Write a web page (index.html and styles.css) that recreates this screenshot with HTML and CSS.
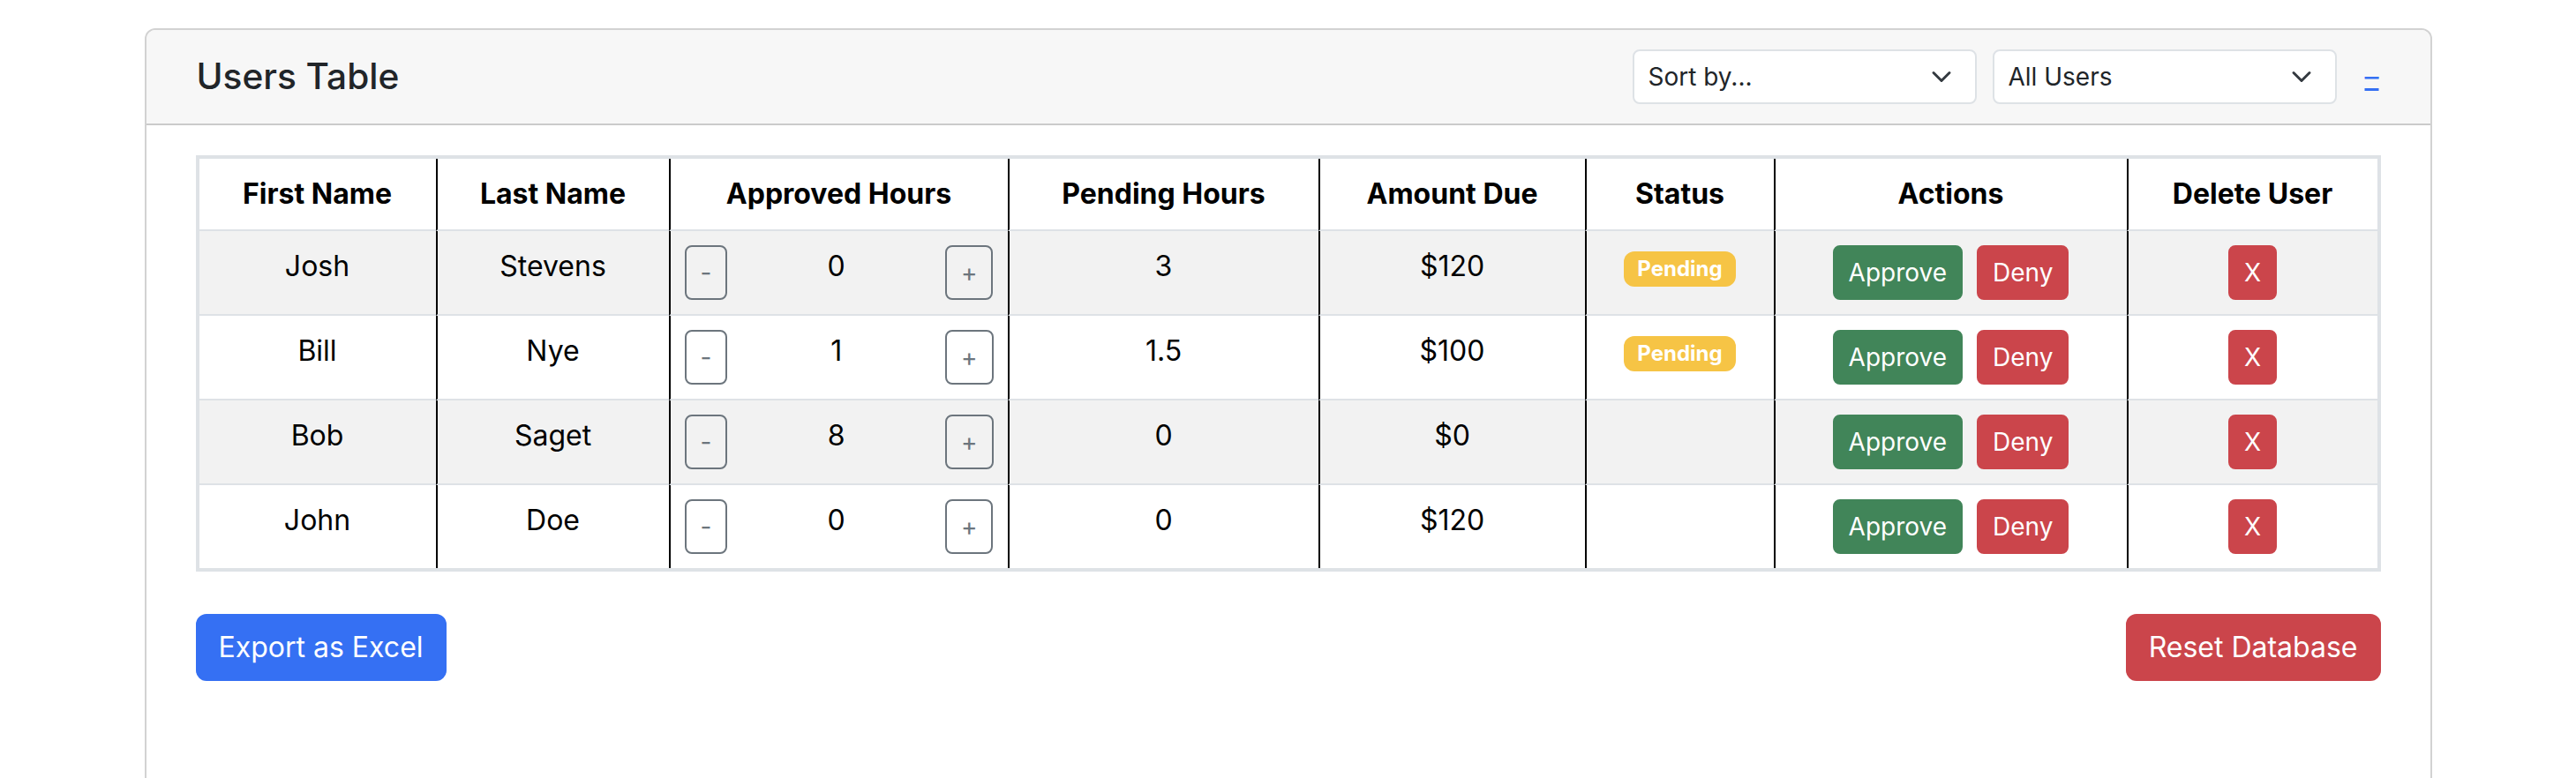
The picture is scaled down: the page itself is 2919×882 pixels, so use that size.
FILE: index.html
```html
<!DOCTYPE html>
<html lang="en">
<head>
<meta charset="utf-8">
<title>Users Table</title>
<link rel="stylesheet" href="styles.css">
</head>
<body>
<div class="container">
  <div class="card">
    <div class="card-header">
      <h5 class="card-title">Users Table</h5>
      <div class="header-controls">
        <span class="select-wrap">
          <select class="form-select"><option>Sort by...</option></select>
          <svg class="chevron" viewBox="0 0 16 16" aria-hidden="true"><path d="m2 5 6 6 6-6"/></svg>
        </span>
        <span class="select-wrap select-gap">
          <select class="form-select"><option>All Users</option></select>
          <svg class="chevron" viewBox="0 0 16 16" aria-hidden="true"><path d="m2 5 6 6 6-6"/></svg>
        </span>
        <button class="btn-link" type="button">–</button>
      </div>
    </div>
    <div class="card-body">
      <table class="users-table">
        <colgroup>
          <col class="c1"><col class="c2"><col class="c3"><col class="c4">
          <col class="c5"><col class="c6"><col class="c7"><col class="c8">
        </colgroup>
        <thead>
          <tr>
            <th>First Name</th><th>Last Name</th><th>Approved Hours</th><th>Pending Hours</th>
            <th>Amount Due</th><th>Status</th><th>Actions</th><th>Delete User</th>
          </tr>
        </thead>
        <tbody>
          <tr class="striped">
            <td>Josh</td><td>Stevens</td>
            <td><div class="hours"><button class="btn-sm btn-outline">-</button><span>0</span><button class="btn-sm btn-outline">+</button></div></td>
            <td>3</td><td>$120</td>
            <td><span class="badge">Pending</span></td>
            <td><div class="actions"><button class="btn-sm btn-success">Approve</button><button class="btn-sm btn-danger">Deny</button></div></td>
            <td><button class="btn-sm btn-danger">X</button></td>
          </tr>
          <tr>
            <td>Bill</td><td>Nye</td>
            <td><div class="hours"><button class="btn-sm btn-outline">-</button><span>1</span><button class="btn-sm btn-outline">+</button></div></td>
            <td>1.5</td><td>$100</td>
            <td><span class="badge">Pending</span></td>
            <td><div class="actions"><button class="btn-sm btn-success">Approve</button><button class="btn-sm btn-danger">Deny</button></div></td>
            <td><button class="btn-sm btn-danger">X</button></td>
          </tr>
          <tr class="striped">
            <td>Bob</td><td>Saget</td>
            <td><div class="hours"><button class="btn-sm btn-outline">-</button><span>8</span><button class="btn-sm btn-outline">+</button></div></td>
            <td>0</td><td>$0</td>
            <td></td>
            <td><div class="actions"><button class="btn-sm btn-success">Approve</button><button class="btn-sm btn-danger">Deny</button></div></td>
            <td><button class="btn-sm btn-danger">X</button></td>
          </tr>
          <tr class="last">
            <td>John</td><td>Doe</td>
            <td><div class="hours"><button class="btn-sm btn-outline">-</button><span>0</span><button class="btn-sm btn-outline">+</button></div></td>
            <td>0</td><td>$120</td>
            <td></td>
            <td><div class="actions"><button class="btn-sm btn-success">Approve</button><button class="btn-sm btn-danger">Deny</button></div></td>
            <td><button class="btn-sm btn-danger">X</button></td>
          </tr>
        </tbody>
      </table>
      <div class="footer-actions">
        <button class="btn btn-primary" type="button">Export as Excel</button>
        <button class="btn btn-danger-lg" type="button">Reset Database</button>
      </div>
    </div>
  </div>
</div>
</body>
</html>
```

FILE: styles.css
```css
html {
  zoom: 2;
  overflow: hidden;
}

body {
  margin: 0;
  font-family: Inter, "Liberation Sans", sans-serif;
  font-size: 16px;
  line-height: 1.5;
  color: #212529;
  background: #fff;
}

.container {
  max-width: 1320px;
  margin: 16px auto 0;
  padding: 0 12px;
  box-sizing: border-box;
}

.card {
  border: 1px solid rgba(0, 0, 0, 0.175);
  border-radius: 6px;
  background: #fff;
}

.card-header {
  display: flex;
  align-items: center;
  justify-content: space-between;
  padding: 7.5px 16px 7.5px 28.5px;
  background: #f7f7f7;
  border-bottom: 1px solid rgba(0, 0, 0, 0.175);
  border-radius: 5px 5px 0 0;
}

.card-title {
  margin: 0;
  font-size: 20.3px;
  font-weight: 500;
  line-height: 1.2;
  color: #212529;
}

.header-controls {
  display: flex;
  align-items: center;
}

.select-wrap {
  position: relative;
  display: block;
}

.select-gap {
  margin-left: 9px;
}

.form-select {
  display: block;
  width: 195px;
  height: 31px;
  box-sizing: border-box;
  padding: 4px 36px 4px 8px;
  font-family: inherit;
  font-size: 14px;
  line-height: 21px;
  color: #212529;
  background: #fff;
  border: 1px solid #dee2e6;
  border-radius: 4px;
  appearance: none;
  -webkit-appearance: none;
}

.chevron {
  position: absolute;
  right: 14px;
  top: 9.5px;
  width: 12px;
  height: 12px;
  pointer-events: none;
}

.chevron path {
  fill: none;
  stroke: #343a40;
  stroke-width: 2;
  stroke-linecap: round;
  stroke-linejoin: round;
}

.btn-link {
  margin-left: 3px;
  padding: 6px 12px;
  font-family: inherit;
  font-size: 16px;
  line-height: 24px;
  color: #3570f3;
  text-decoration: underline;
  background: transparent;
  border: 1px solid transparent;
  border-radius: 6px;
}

.card-body {
  padding: 17px 28px 16px;
  min-height: 420px;
}

.users-table {
  width: 1238px;
  table-layout: fixed;
  border-collapse: separate;
  border-spacing: 0;
  border: 2px solid #dee2e6;
  color: #000;
}

.c1 { width: 134px; }
.c2 { width: 132px; }
.c3 { width: 192px; }
.c4 { width: 176px; }
.c5 { width: 151px; }
.c6 { width: 107px; }
.c7 { width: 200px; }
.c8 { width: 142px; }

.users-table th,
.users-table td {
  padding: 8px;
  text-align: center;
  vertical-align: top;
  line-height: 24px;
  border-bottom: 1px solid #dee2e6;
  border-left: 1px solid #000;
}

.users-table th:first-child,
.users-table td:first-child {
  border-left: 0;
}

.users-table th {
  font-weight: 700;
  background: #fff;
}

.users-table tr.last td {
  border-bottom: 0;
}

.users-table tr.striped td {
  background: #f2f2f2;
}

.hours {
  display: flex;
  justify-content: space-between;
  align-items: flex-start;
}

.actions {
  display: flex;
  justify-content: center;
  gap: 8px;
}

.btn-sm {
  padding: 4px 8px;
  font-family: inherit;
  font-size: 14px;
  line-height: 21px;
  border: 1px solid transparent;
  border-radius: 4px;
  color: #fff;
  vertical-align: top;
}

.btn-outline {
  color: #6c757d;
  background: transparent;
  border-color: #6c757d;
}

.btn-success {
  background: #418559;
  border-color: #418559;
}

.btn-danger {
  background: #cb454b;
  border-color: #cb454b;
}

.badge {
  display: inline-block;
  padding: 4.2px 7.8px;
  font-size: 12px;
  font-weight: 700;
  line-height: 1;
  color: #fff;
  background: #f6c445;
  border-radius: 6px;
}

.footer-actions {
  display: flex;
  justify-content: space-between;
  margin-top: 24px;
}

.btn {
  padding: 6px 12px;
  font-family: inherit;
  font-size: 16px;
  line-height: 24px;
  color: #fff;
  border: 1px solid transparent;
  border-radius: 6px;
}

.btn-primary {
  background: #3570f3;
  border-color: #3570f3;
}

.btn-danger-lg {
  background: #cb454b;
  border-color: #cb454b;
}
```
